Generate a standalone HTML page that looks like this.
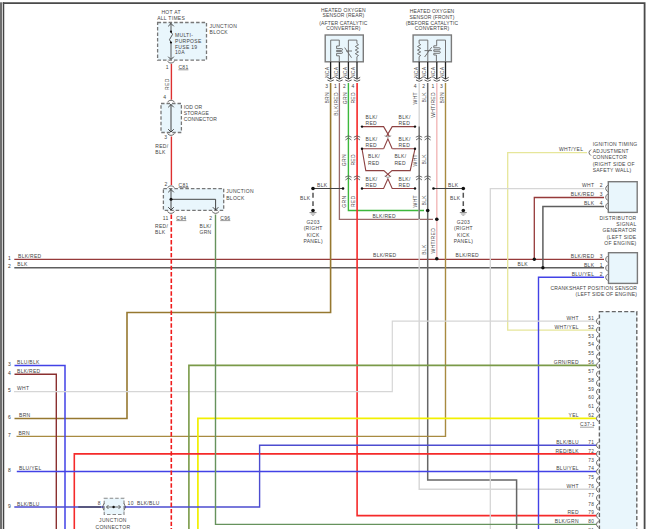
<!DOCTYPE html>
<html><head><meta charset="utf-8"><style>
html,body{margin:0;padding:0;background:#fff;width:650px;height:529px;overflow:hidden}
svg{display:block;font-family:"Liberation Sans",sans-serif}
</style></head><body>
<svg width="650" height="529" viewBox="0 0 650 529">
<rect x="0" y="2.3" width="2" height="527" fill="#6e6e6e"/>
<path d="M3.5,2.3 L3.5,529" stroke="#444" stroke-width="1.5" fill="none" />
<path d="M2.8,3.2 L644.6,3.2 L644.6,529" stroke="#4a4a4a" stroke-width="1.8" fill="none" />
<path d="M14.3,259.3 L604,259.3" stroke="#963a3a" stroke-width="1.3" fill="none" />
<path d="M14.3,267.8 L604,267.8" stroke="#5e5e5e" stroke-width="1.6" fill="none" />
<path d="M330.6,83 L330.6,312.5 L127,312.5 L127,418.5 L14.5,418.5" stroke="#967830" stroke-width="1.6" fill="none" />
<path d="M339.4,83 L339.4,219.3 L433,219.3" stroke="#9a6a6a" stroke-width="1.3" fill="none" />
<path d="M348.4,83 L348.4,210.5 L424,210.5" stroke="#3cb83c" stroke-width="1.4" fill="none" />
<path d="M357.1,83 L357.1,515.6 L596,515.6" stroke="#f52a2a" stroke-width="1.6" fill="none" />
<path d="M419.2,83 L419.2,489.2 L596,489.2" stroke="#d6d6d6" stroke-width="1.4" fill="none" />
<path d="M419.2,126.5 L419.2,219" stroke="#6a6a6a" stroke-width="1.3" fill="none" />
<path d="M427.7,83 L427.7,480 L516.6,480 L516.6,529" stroke="#666" stroke-width="1.5" fill="none" />
<path d="M436.8,83 L436.8,258.8" stroke="#f2b8b8" stroke-width="1.4" fill="none" />
<path d="M445.5,83 L445.5,436.4 L16.5,436.4" stroke="#a88a40" stroke-width="1.4" fill="none" />
<path d="M587,152.6 L507.7,152.6 L507.7,330.04 L596,330.04" stroke="#e6e69a" stroke-width="1.3" fill="none" />
<path d="M604,188.6 L490.3,188.6 L490.3,529" stroke="#d6d6d6" stroke-width="1.3" fill="none" />
<path d="M534.3,259.3 L534.3,197.5 L604,197.5" stroke="#963a3a" stroke-width="1.3" fill="none" />
<path d="M542.9,267.8 L542.9,206.5 L604,206.5" stroke="#5e5e5e" stroke-width="1.5" fill="none" />
<path d="M604,277.3 L538.5,277.3 L538.5,529" stroke="#4242e6" stroke-width="1.4" fill="none" />
<path d="M14.5,365.5 L65,365.5 L65,529" stroke="#4242e6" stroke-width="1.5" fill="none" />
<path d="M14.5,374.2 L56.3,374.2 L56.3,529" stroke="#8a3030" stroke-width="1.4" fill="none" />
<path d="M14,391.6 L392.3,391.6 L392.3,321.2 L596,321.2" stroke="#d6d6d6" stroke-width="1.2" fill="none" />
<path d="M188.9,529 L188.9,365.4 L596,365.4" stroke="#7a9a48" stroke-width="1.6" fill="none" />
<path d="M197.9,529 L197.9,418.44 L596,418.44" stroke="#f2f000" stroke-width="1.7" fill="none" />
<path d="M74.3,529 L74.3,453.9 L596,453.9" stroke="#f52a2a" stroke-width="1.6" fill="none" />
<path d="M16.8,471.5 L596,471.5" stroke="#4242e6" stroke-width="1.4" fill="none" />
<path d="M14.3,507 L259.6,507 L259.6,445.2 L596,445.2" stroke="#4c4cd0" stroke-width="1.4" fill="none" />
<path d="M78.3,507 L101,507" stroke="#444" stroke-width="1.2" fill="none" />
<path d="M171.4,63.8 L171.4,99.7" stroke="#dd3030" stroke-width="1.4" fill="none" />
<path d="M171.4,136.5 L171.4,185" stroke="#dd3030" stroke-width="1.4" fill="none" />
<path d="M171.3,214.5 L171.3,529" stroke="#f01c1c" stroke-width="1.6" fill="none" stroke-dasharray="4.4,2" />
<path d="M215.5,214.5 L215.5,524.4 L596,524.4" stroke="#66925c" stroke-width="1.4" fill="none" />
<path d="M362,126.6 H383.6 L389.3,136.4 M415,126.6 H392.2 L386.5,136.4" stroke="#8e4242" stroke-width="1.1" fill="none"/>
<path d="M384.6,135.8 Q387.9,138.4 391.2,135.8" stroke="#777" stroke-width="0.8" fill="none"/>
<path d="M383.6,148.8 L387.9,138.8 L392.2,148.8" stroke="#8e4242" stroke-width="1.1" fill="none"/>
<path d="M383.6,148.8 H362 L365.8,170.6 H383.8 L390.6,176.6 M392.2,148.8 H415 L410.2,170.6 H392 L385.2,176.6" stroke="#8e4242" stroke-width="1.1" fill="none"/>
<path d="M384.6,176.2 Q387.9,178.6 391.2,176.2" stroke="#777" stroke-width="0.8" fill="none"/>
<path d="M362,188.5 H383.6 L387.9,178.8 L392.2,188.5 H415" stroke="#8e4242" stroke-width="1.1" fill="none"/>
<circle cx="362" cy="126.6" r="1.2" fill="#111"/>
<circle cx="415" cy="126.6" r="1.2" fill="#111"/>
<circle cx="362" cy="148.8" r="1.2" fill="#111"/>
<circle cx="415" cy="148.8" r="1.2" fill="#111"/>
<circle cx="362" cy="188.5" r="1.2" fill="#111"/>
<circle cx="415" cy="188.5" r="1.2" fill="#111"/>
<path d="M313,188.5 L343,188.5" stroke="#444" stroke-width="1.0" fill="none" />
<circle cx="313" cy="188.5" r="1.8" fill="#111"/>
<circle cx="343" cy="188.5" r="1.3" fill="#111"/>
<path d="M313,192.8 L313,206" stroke="#555" stroke-width="1.5" fill="none" stroke-dasharray="5,3.4" />
<circle cx="313" cy="210.5" r="1.8" fill="#111"/>
<path d="M433.5,188.5 L463.3,188.5" stroke="#444" stroke-width="1.0" fill="none" />
<circle cx="463.3" cy="188.5" r="1.8" fill="#111"/>
<circle cx="433.5" cy="188.5" r="1.3" fill="#111"/>
<path d="M463.3,192.8 L463.3,206" stroke="#555" stroke-width="1.5" fill="none" stroke-dasharray="5,3.4" />
<circle cx="463.3" cy="210.5" r="1.8" fill="#111"/>
<path d="M309.5,212.6 L316.5,212.6" stroke="#777" stroke-width="0.9" fill="none" />
<path d="M310.8,214 L315.2,214" stroke="#888" stroke-width="0.8" fill="none" />
<path d="M312,215.3 L314,215.3" stroke="#999" stroke-width="0.8" fill="none" />
<path d="M459.8,212.6 L466.8,212.6" stroke="#777" stroke-width="0.9" fill="none" />
<path d="M461.1,214 L465.5,214" stroke="#888" stroke-width="0.8" fill="none" />
<path d="M462.3,215.3 L464.3,215.3" stroke="#999" stroke-width="0.8" fill="none" />
<circle cx="427.7" cy="210.5" r="1.8" fill="#111"/>
<circle cx="436.8" cy="219.3" r="1.8" fill="#111"/>
<circle cx="436.8" cy="258.8" r="1.8" fill="#111"/>
<circle cx="534.3" cy="259.3" r="1.7" fill="#111"/>
<circle cx="542.9" cy="267.8" r="1.7" fill="#111"/>
<rect x="157.6" y="22.5" width="48.900000000000006" height="37.6" fill="#e9f6fc" stroke="#777" stroke-width="1.3" stroke-dasharray="3.5,2"/>
<rect x="161" y="103.5" width="20.400000000000006" height="29.0" fill="#e9f6fc" stroke="#777" stroke-width="1.3" stroke-dasharray="3.5,2"/>
<rect x="163.4" y="188.6" width="60.29999999999998" height="21.700000000000017" fill="#e9f6fc" stroke="#777" stroke-width="1.3" stroke-dasharray="3.5,2"/>
<rect x="325.2" y="35" width="38.10000000000002" height="26.799999999999997" fill="#e9f6fc" stroke="#7a7a7a" stroke-width="1.4"/>
<rect x="413.1" y="35" width="38.299999999999955" height="26.799999999999997" fill="#e9f6fc" stroke="#7a7a7a" stroke-width="1.4"/>
<rect x="608.3" y="181.7" width="28.90000000000009" height="30.700000000000017" fill="#e9f6fc" stroke="#7a7a7a" stroke-width="1.4"/>
<rect x="608.5" y="252.7" width="28.899999999999977" height="30.69999999999999" fill="#e9f6fc" stroke="#7a7a7a" stroke-width="1.4"/>
<rect x="599.4" y="311.6" width="37.39999999999998" height="223.39999999999998" fill="#e9f6fc" stroke="#666" stroke-width="1.4" stroke-dasharray="4,2.2"/>
<rect x="104.2" y="498.3" width="19.799999999999997" height="16.19999999999999" fill="#e9f6fc" stroke="#888" stroke-width="1.1" stroke-dasharray="3.5,2"/>
<path d="M104,503.5 Q101,507 104,510.5 M124,503.5 Q127,507 124,510.5 M108.5,505 L106.5,507 L108.5,509 M118.5,505 L120.5,507 L118.5,509 M106.5,507 H120.5" stroke="#444" stroke-width="0.8" fill="none"/>
<circle cx="113.6" cy="507" r="1.2" fill="#111"/>
<path d="M171,23 L171,31.7" stroke="#444" stroke-width="0.9" fill="none" />
<path d="M171,31.7 Q174,34.5 171,37 Q168,39.5 171,42.5" stroke="#444" stroke-width="0.9" fill="none"/>
<path d="M171,42.5 L171,59" stroke="#444" stroke-width="0.9" fill="none" />
<circle cx="171" cy="31.7" r="1.1" fill="#111"/>
<circle cx="171" cy="42.5" r="1.1" fill="#111"/>
<path d="M168.2,26.3 L171,23.5 L173.8,26.3" stroke="#333" stroke-width="0.9" fill="none" />
<path d="M168.2,56.7 L171,59.5 L173.8,56.7" stroke="#333" stroke-width="0.9" fill="none" />
<path d="M167.5,61.3 Q171,64.89999999999999 174.5,61.3" stroke="#555" stroke-width="0.9" fill="none"/>
<path d="M171,104 L171,132" stroke="#444" stroke-width="1.0" fill="none" />
<path d="M168.2,107.3 L171,104.5 L173.8,107.3" stroke="#333" stroke-width="0.9" fill="none" />
<path d="M168.2,129.2 L171,132 L173.8,129.2" stroke="#333" stroke-width="0.9" fill="none" />
<path d="M167.5,133.6 Q171,137.2 174.5,133.6" stroke="#555" stroke-width="0.9" fill="none"/>
<path d="M167.5,102 Q171,98.4 174.5,102" stroke="#555" stroke-width="0.9" fill="none"/>
<path d="M167.5,187.6 Q171,184.0 174.5,187.6" stroke="#555" stroke-width="0.9" fill="none"/>
<path d="M171,189 L171,210" stroke="#333" stroke-width="0.9" fill="none" />
<path d="M171,199.3 L215.6,199.3 L215.6,210" stroke="#333" stroke-width="0.9" fill="none" />
<circle cx="171" cy="199.3" r="1.5" fill="#111"/>
<path d="M168.2,192.3 L171,189.5 L173.8,192.3" stroke="#333" stroke-width="0.9" fill="none" />
<path d="M168.2,207.2 L171,210 L173.8,207.2" stroke="#333" stroke-width="0.9" fill="none" />
<path d="M212.79999999999998,207.2 L215.6,210 L218.4,207.2" stroke="#333" stroke-width="0.9" fill="none" />
<path d="M167.5,211.6 Q171,215.2 174.5,211.6" stroke="#555" stroke-width="0.9" fill="none"/>
<path d="M212.1,211.6 Q215.6,215.2 219.1,211.6" stroke="#555" stroke-width="0.9" fill="none"/>
<path d="M330.6,61.8 L330.6,79" stroke="#222" stroke-width="1.3" fill="none" />
<path d="M327.40000000000003,77.3 L330.6,79.2 L333.8,77.3 M327.40000000000003,80 Q330.6,82.6 333.8,80" stroke="#444" stroke-width="0.9" fill="none"/>
<path d="M339.4,61.8 L339.4,79" stroke="#222" stroke-width="1.3" fill="none" />
<path d="M336.2,77.3 L339.4,79.2 L342.59999999999997,77.3 M336.2,80 Q339.4,82.6 342.59999999999997,80" stroke="#444" stroke-width="0.9" fill="none"/>
<path d="M348.4,61.8 L348.4,79" stroke="#222" stroke-width="1.3" fill="none" />
<path d="M345.2,77.3 L348.4,79.2 L351.59999999999997,77.3 M345.2,80 Q348.4,82.6 351.59999999999997,80" stroke="#444" stroke-width="0.9" fill="none"/>
<path d="M357,61.8 L357,79" stroke="#222" stroke-width="1.3" fill="none" />
<path d="M353.8,77.3 L357,79.2 L360.2,77.3 M353.8,80 Q357,82.6 360.2,80" stroke="#444" stroke-width="0.9" fill="none"/>
<path d="M419.2,61.8 L419.2,79" stroke="#222" stroke-width="1.3" fill="none" />
<path d="M416.0,77.3 L419.2,79.2 L422.4,77.3 M416.0,80 Q419.2,82.6 422.4,80" stroke="#444" stroke-width="0.9" fill="none"/>
<path d="M427.7,61.8 L427.7,79" stroke="#222" stroke-width="1.3" fill="none" />
<path d="M424.5,77.3 L427.7,79.2 L430.9,77.3 M424.5,80 Q427.7,82.6 430.9,80" stroke="#444" stroke-width="0.9" fill="none"/>
<path d="M436.8,61.8 L436.8,79" stroke="#222" stroke-width="1.3" fill="none" />
<path d="M433.6,77.3 L436.8,79.2 L440.0,77.3 M433.6,80 Q436.8,82.6 440.0,80" stroke="#444" stroke-width="0.9" fill="none"/>
<path d="M445.5,61.8 L445.5,79" stroke="#222" stroke-width="1.3" fill="none" />
<path d="M442.3,77.3 L445.5,79.2 L448.7,77.3 M442.3,80 Q445.5,82.6 448.7,80" stroke="#444" stroke-width="0.9" fill="none"/>
<path d="M330.7,61.8 V40.1 H339.3 V46 H336.6 V48.6 H341.6 A0.9,0.9 0 0 1 341.6,50.4 H336.6 V51.6 H341.6 A0.9,0.9 0 0 1 341.6,53.4 H336.6 V55.8 H339.3 V61.8" stroke="#666" stroke-width="0.9" fill="none"/>
<path d="M348.4,61.8 V40.1 H356.9 V43.5 l1.6,1.2 l-3.2,1.8 l3.2,1.8 l-3.2,1.8 l3.2,1.8 l-3.2,1.8 l3.2,1.8 l-1.6,1.2 V61.8" stroke="#666" stroke-width="0.9" fill="none"/>
<path d="M344.7,47.6 L351.5,57.7 M346,51 H352" stroke="#666" stroke-width="0.9" fill="none"/>
<path d="M445.5,61.8 V40.1 H436.7 V45.8 H433.8 V47.8 H439.3 A1,1 0 0 1 439.3,49.8 H433.8 V51.3 H439.3 A1,1 0 0 1 439.3,53.3 H433.8 V55 H436.4 V61.8" stroke="#666" stroke-width="0.9" fill="none"/>
<path d="M427.8,61.8 V40.1 H419.1 V43.5 l1.6,1.2 l-3.2,1.8 l3.2,1.8 l-3.2,1.8 l3.2,1.8 l-3.2,1.8 l3.2,1.8 l-1.6,1.2 V61.8" stroke="#666" stroke-width="0.9" fill="none"/>
<path d="M424.6,57 L431.7,47.2 M424.5,50.6 H432" stroke="#666" stroke-width="0.9" fill="none"/>
<path d="M345.2,137.2 Q348.4,134.4 351.59999999999997,137.2 M345.4,140 L348.4,137.9 L351.4,140" stroke="#555" stroke-width="0.85" fill="none"/>
<path d="M353.8,137.2 Q357,134.4 360.2,137.2 M354,140 L357,137.9 L360,140" stroke="#555" stroke-width="0.85" fill="none"/>
<path d="M415.8,137.2 Q419,134.4 422.2,137.2 M416,140 L419,137.9 L422,140" stroke="#555" stroke-width="0.85" fill="none"/>
<path d="M424.40000000000003,137.2 Q427.6,134.4 430.8,137.2 M424.6,140 L427.6,137.9 L430.6,140" stroke="#555" stroke-width="0.85" fill="none"/>
<path d="M345.2,177.2 Q348.4,174.4 351.59999999999997,177.2 M345.4,180 L348.4,177.9 L351.4,180" stroke="#555" stroke-width="0.85" fill="none"/>
<path d="M353.8,177.2 Q357,174.4 360.2,177.2 M354,180 L357,177.9 L360,180" stroke="#555" stroke-width="0.85" fill="none"/>
<path d="M415.8,177.2 Q419,174.4 422.2,177.2 M416,180 L419,177.9 L422,180" stroke="#555" stroke-width="0.85" fill="none"/>
<path d="M424.40000000000003,177.2 Q427.6,174.4 430.8,177.2 M424.6,180 L427.6,177.9 L430.6,180" stroke="#555" stroke-width="0.85" fill="none"/>
<path d="M598.4,318.0 Q594.6,321.2 598.4,324.4" stroke="#555" stroke-width="0.9" fill="none"/>
<text x="594.3" y="319.9" text-anchor="end" font-size="4.8" letter-spacing="0.3" fill="#444" >51</text>
<path d="M598.4,326.84 Q594.6,330.03999999999996 598.4,333.23999999999995" stroke="#555" stroke-width="0.9" fill="none"/>
<text x="594.3" y="328.73999999999995" text-anchor="end" font-size="4.8" letter-spacing="0.3" fill="#444" >52</text>
<path d="M598.4,335.68 Q594.6,338.88 598.4,342.08" stroke="#555" stroke-width="0.9" fill="none"/>
<text x="594.3" y="337.58" text-anchor="end" font-size="4.8" letter-spacing="0.3" fill="#444" >53</text>
<path d="M598.4,344.52 Q594.6,347.71999999999997 598.4,350.91999999999996" stroke="#555" stroke-width="0.9" fill="none"/>
<text x="594.3" y="346.41999999999996" text-anchor="end" font-size="4.8" letter-spacing="0.3" fill="#444" >54</text>
<path d="M598.4,353.36 Q594.6,356.56 598.4,359.76" stroke="#555" stroke-width="0.9" fill="none"/>
<text x="594.3" y="355.26" text-anchor="end" font-size="4.8" letter-spacing="0.3" fill="#444" >55</text>
<path d="M598.4,362.2 Q594.6,365.4 598.4,368.59999999999997" stroke="#555" stroke-width="0.9" fill="none"/>
<text x="594.3" y="364.09999999999997" text-anchor="end" font-size="4.8" letter-spacing="0.3" fill="#444" >56</text>
<path d="M598.4,371.04 Q594.6,374.24 598.4,377.44" stroke="#555" stroke-width="0.9" fill="none"/>
<text x="594.3" y="372.94" text-anchor="end" font-size="4.8" letter-spacing="0.3" fill="#444" >57</text>
<path d="M598.4,379.88 Q594.6,383.08 598.4,386.28" stroke="#555" stroke-width="0.9" fill="none"/>
<text x="594.3" y="381.78" text-anchor="end" font-size="4.8" letter-spacing="0.3" fill="#444" >58</text>
<path d="M598.4,388.71999999999997 Q594.6,391.91999999999996 598.4,395.11999999999995" stroke="#555" stroke-width="0.9" fill="none"/>
<text x="594.3" y="390.61999999999995" text-anchor="end" font-size="4.8" letter-spacing="0.3" fill="#444" >59</text>
<path d="M598.4,397.56 Q594.6,400.76 598.4,403.96" stroke="#555" stroke-width="0.9" fill="none"/>
<text x="594.3" y="399.46" text-anchor="end" font-size="4.8" letter-spacing="0.3" fill="#444" >60</text>
<path d="M598.4,406.40000000000003 Q594.6,409.6 598.4,412.8" stroke="#555" stroke-width="0.9" fill="none"/>
<text x="594.3" y="408.3" text-anchor="end" font-size="4.8" letter-spacing="0.3" fill="#444" >61</text>
<path d="M598.4,415.24 Q594.6,418.44 598.4,421.64" stroke="#555" stroke-width="0.9" fill="none"/>
<text x="594.3" y="417.14" text-anchor="end" font-size="4.8" letter-spacing="0.3" fill="#444" >62</text>
<path d="M598.4,442.0 Q594.6,445.2 598.4,448.4" stroke="#555" stroke-width="0.9" fill="none"/>
<text x="594.3" y="443.9" text-anchor="end" font-size="4.8" letter-spacing="0.3" fill="#444" >71</text>
<path d="M598.4,450.8 Q594.6,454.0 598.4,457.2" stroke="#555" stroke-width="0.9" fill="none"/>
<text x="594.3" y="452.7" text-anchor="end" font-size="4.8" letter-spacing="0.3" fill="#444" >72</text>
<path d="M598.4,459.6 Q594.6,462.8 598.4,466.0" stroke="#555" stroke-width="0.9" fill="none"/>
<text x="594.3" y="461.5" text-anchor="end" font-size="4.8" letter-spacing="0.3" fill="#444" >73</text>
<path d="M598.4,468.4 Q594.6,471.59999999999997 598.4,474.79999999999995" stroke="#555" stroke-width="0.9" fill="none"/>
<text x="594.3" y="470.29999999999995" text-anchor="end" font-size="4.8" letter-spacing="0.3" fill="#444" >74</text>
<path d="M598.4,477.2 Q594.6,480.4 598.4,483.59999999999997" stroke="#555" stroke-width="0.9" fill="none"/>
<text x="594.3" y="479.09999999999997" text-anchor="end" font-size="4.8" letter-spacing="0.3" fill="#444" >75</text>
<path d="M598.4,486.0 Q594.6,489.2 598.4,492.4" stroke="#555" stroke-width="0.9" fill="none"/>
<text x="594.3" y="487.9" text-anchor="end" font-size="4.8" letter-spacing="0.3" fill="#444" >76</text>
<path d="M598.4,494.8 Q594.6,498.0 598.4,501.2" stroke="#555" stroke-width="0.9" fill="none"/>
<text x="594.3" y="496.7" text-anchor="end" font-size="4.8" letter-spacing="0.3" fill="#444" >77</text>
<path d="M598.4,503.6 Q594.6,506.8 598.4,510.0" stroke="#555" stroke-width="0.9" fill="none"/>
<text x="594.3" y="505.5" text-anchor="end" font-size="4.8" letter-spacing="0.3" fill="#444" >78</text>
<path d="M598.4,512.4 Q594.6,515.6 598.4,518.8000000000001" stroke="#555" stroke-width="0.9" fill="none"/>
<text x="594.3" y="514.3000000000001" text-anchor="end" font-size="4.8" letter-spacing="0.3" fill="#444" >79</text>
<path d="M598.4,521.1999999999999 Q594.6,524.4 598.4,527.6" stroke="#555" stroke-width="0.9" fill="none"/>
<text x="594.3" y="523.1" text-anchor="end" font-size="4.8" letter-spacing="0.3" fill="#444" >80</text>
<path d="M598.4,530.0 Q594.6,533.2 598.4,536.4000000000001" stroke="#555" stroke-width="0.9" fill="none"/>
<text x="594.3" y="531.9000000000001" text-anchor="end" font-size="4.8" letter-spacing="0.3" fill="#444" >81</text>
<path d="M607.6,185.3 Q603.8,188.5 607.6,191.7" stroke="#555" stroke-width="0.9" fill="none"/>
<path d="M607.6,194.0 Q603.8,197.2 607.6,200.39999999999998" stroke="#555" stroke-width="0.9" fill="none"/>
<path d="M607.6,203.10000000000002 Q603.8,206.3 607.6,209.5" stroke="#555" stroke-width="0.9" fill="none"/>
<path d="M607.6,256.0 Q603.8,259.2 607.6,262.4" stroke="#555" stroke-width="0.9" fill="none"/>
<path d="M607.6,264.8 Q603.8,268 607.6,271.2" stroke="#555" stroke-width="0.9" fill="none"/>
<path d="M607.6,274.1 Q603.8,277.3 607.6,280.5" stroke="#555" stroke-width="0.9" fill="none"/>
<path d="M591,149.6 Q587,152.6 591,155.6" stroke="#555" stroke-width="0.9" fill="none"/>
<text x="171.15" y="13.5" text-anchor="middle" font-size="5" letter-spacing="0.3" fill="#444" >HOT AT</text>
<text x="171.15" y="20" text-anchor="middle" font-size="5" letter-spacing="0.3" fill="#444" >ALL TIMES</text>
<text x="175" y="37.0" text-anchor="start" font-size="5" letter-spacing="0.3" fill="#444" >MULTI-</text>
<text x="175" y="42.8" text-anchor="start" font-size="5" letter-spacing="0.3" fill="#444" >PURPOSE</text>
<text x="175" y="48.6" text-anchor="start" font-size="5" letter-spacing="0.3" fill="#444" >FUSE 19</text>
<text x="175" y="54.4" text-anchor="start" font-size="5" letter-spacing="0.3" fill="#444" >10A</text>
<text x="209.5" y="28" text-anchor="start" font-size="5" letter-spacing="0.3" fill="#444" >JUNCTION</text>
<text x="209.5" y="34" text-anchor="start" font-size="5" letter-spacing="0.3" fill="#444" >BLOCK</text>
<text x="168.8" y="68.5" text-anchor="end" font-size="5" letter-spacing="0.3" fill="#444" >1</text>
<text x="178.4" y="68.7" text-anchor="start" font-size="5" letter-spacing="0.3" fill="#444" >C81</text>
<path d="M178.4,69.8 L188.4,69.8" stroke="#555" stroke-width="0.6" fill="none" />
<text x="0" y="0" transform="translate(169,78.4) rotate(-90)" text-anchor="end" font-size="5" letter-spacing="0.35" fill="#444">RED</text>
<text x="166.3" y="99" text-anchor="end" font-size="5" letter-spacing="0.3" fill="#444" >4</text>
<text x="183.8" y="108.8" text-anchor="start" font-size="5" letter-spacing="0.12" fill="#444" >IOD OR</text>
<text x="183.8" y="115.05" text-anchor="start" font-size="5" letter-spacing="0.12" fill="#444" >STORAGE</text>
<text x="183.8" y="121.3" text-anchor="start" font-size="5" letter-spacing="0.12" fill="#444" >CONNECTOR</text>
<text x="167.3" y="139.2" text-anchor="end" font-size="5" letter-spacing="0.3" fill="#444" >3</text>
<text x="155.3" y="147.8" text-anchor="start" font-size="5" letter-spacing="0.3" fill="#444" >RED/</text>
<text x="155.3" y="154.3" text-anchor="start" font-size="5" letter-spacing="0.3" fill="#444" >BLK</text>
<text x="167.5" y="186.4" text-anchor="end" font-size="5" letter-spacing="0.3" fill="#444" >2</text>
<text x="178.5" y="186.6" text-anchor="start" font-size="5" letter-spacing="0.3" fill="#444" >C81</text>
<path d="M178.5,187.4 L188.5,187.4" stroke="#555" stroke-width="0.6" fill="none" />
<text x="226.2" y="193" text-anchor="start" font-size="5" letter-spacing="0.3" fill="#444" >JUNCTION</text>
<text x="226.2" y="199.8" text-anchor="start" font-size="5" letter-spacing="0.3" fill="#444" >BLOCK</text>
<text x="168.5" y="219.6" text-anchor="end" font-size="5" letter-spacing="0.3" fill="#444" >11</text>
<text x="176.3" y="219.6" text-anchor="start" font-size="5" letter-spacing="0.3" fill="#444" >C94</text>
<path d="M176.3,220.6 L186.3,220.6" stroke="#555" stroke-width="0.6" fill="none" />
<text x="212.3" y="219.6" text-anchor="end" font-size="5" letter-spacing="0.3" fill="#444" >2</text>
<text x="220.3" y="219.6" text-anchor="start" font-size="5" letter-spacing="0.3" fill="#444" >C96</text>
<path d="M220.3,220.6 L230.3,220.6" stroke="#555" stroke-width="0.6" fill="none" />
<text x="155" y="228" text-anchor="start" font-size="5" letter-spacing="0.3" fill="#444" >RED/</text>
<text x="155" y="234" text-anchor="start" font-size="5" letter-spacing="0.3" fill="#444" >BLK</text>
<text x="199.5" y="228" text-anchor="start" font-size="5" letter-spacing="0.3" fill="#444" >BLK/</text>
<text x="199.5" y="234" text-anchor="start" font-size="5" letter-spacing="0.3" fill="#444" >GRN</text>
<text x="343.375" y="12" text-anchor="middle" font-size="5" letter-spacing="0.15" fill="#444" >HEATED OXYGEN</text>
<text x="343.375" y="16.5" text-anchor="middle" font-size="5" letter-spacing="0.15" fill="#444" >SENSOR (REAR)</text>
<text x="343.375" y="24.5" text-anchor="middle" font-size="5" letter-spacing="0.15" fill="#444" >(AFTER CATALYTIC</text>
<text x="343.375" y="30" text-anchor="middle" font-size="5" letter-spacing="0.15" fill="#444" >CONVERTER)</text>
<text x="432.075" y="12.5" text-anchor="middle" font-size="5" letter-spacing="0.15" fill="#444" >HEATED OXYGEN</text>
<text x="432.075" y="18.5" text-anchor="middle" font-size="5" letter-spacing="0.15" fill="#444" >SENSOR (FRONT)</text>
<text x="432.075" y="24.5" text-anchor="middle" font-size="5" letter-spacing="0.15" fill="#444" >(BEFORE CATALYTIC</text>
<text x="432.075" y="30" text-anchor="middle" font-size="5" letter-spacing="0.15" fill="#444" >CONVERTER)</text>
<text x="0" y="0" transform="translate(329.0,66.5) rotate(-90)" text-anchor="end" font-size="5" letter-spacing="0.35" fill="#444">NCA</text>
<text x="0" y="0" transform="translate(337.79999999999995,66.5) rotate(-90)" text-anchor="end" font-size="5" letter-spacing="0.35" fill="#444">NCA</text>
<text x="0" y="0" transform="translate(346.79999999999995,66.5) rotate(-90)" text-anchor="end" font-size="5" letter-spacing="0.35" fill="#444">NCA</text>
<text x="0" y="0" transform="translate(355.4,66.5) rotate(-90)" text-anchor="end" font-size="5" letter-spacing="0.35" fill="#444">NCA</text>
<text x="0" y="0" transform="translate(417.59999999999997,66.5) rotate(-90)" text-anchor="end" font-size="5" letter-spacing="0.35" fill="#444">NCA</text>
<text x="0" y="0" transform="translate(426.09999999999997,66.5) rotate(-90)" text-anchor="end" font-size="5" letter-spacing="0.35" fill="#444">NCA</text>
<text x="0" y="0" transform="translate(435.2,66.5) rotate(-90)" text-anchor="end" font-size="5" letter-spacing="0.35" fill="#444">NCA</text>
<text x="0" y="0" transform="translate(443.9,66.5) rotate(-90)" text-anchor="end" font-size="5" letter-spacing="0.35" fill="#444">NCA</text>
<text x="326.75" y="88" text-anchor="middle" font-size="5" letter-spacing="0.3" fill="#444" >3</text>
<text x="335.54999999999995" y="88" text-anchor="middle" font-size="5" letter-spacing="0.3" fill="#444" >1</text>
<text x="344.54999999999995" y="88" text-anchor="middle" font-size="5" letter-spacing="0.3" fill="#444" >2</text>
<text x="353.15" y="88" text-anchor="middle" font-size="5" letter-spacing="0.3" fill="#444" >4</text>
<text x="415.34999999999997" y="88" text-anchor="middle" font-size="5" letter-spacing="0.3" fill="#444" >4</text>
<text x="423.84999999999997" y="88" text-anchor="middle" font-size="5" letter-spacing="0.3" fill="#444" >2</text>
<text x="432.95" y="88" text-anchor="middle" font-size="5" letter-spacing="0.3" fill="#444" >1</text>
<text x="441.65" y="88" text-anchor="middle" font-size="5" letter-spacing="0.3" fill="#444" >3</text>
<text x="0" y="0" transform="translate(328.8,92) rotate(-90)" text-anchor="end" font-size="5" letter-spacing="0.35" fill="#444">BRN</text>
<text x="0" y="0" transform="translate(337.59999999999997,92) rotate(-90)" text-anchor="end" font-size="5" letter-spacing="0.35" fill="#444">BLK/RED</text>
<text x="0" y="0" transform="translate(346.59999999999997,92) rotate(-90)" text-anchor="end" font-size="5" letter-spacing="0.35" fill="#444">GRN</text>
<text x="0" y="0" transform="translate(355.2,92) rotate(-90)" text-anchor="end" font-size="5" letter-spacing="0.35" fill="#444">RED</text>
<text x="0" y="0" transform="translate(417.4,92) rotate(-90)" text-anchor="end" font-size="5" letter-spacing="0.35" fill="#444">WHT</text>
<text x="0" y="0" transform="translate(425.9,92) rotate(-90)" text-anchor="end" font-size="5" letter-spacing="0.35" fill="#444">BLK</text>
<text x="0" y="0" transform="translate(435.0,92) rotate(-90)" text-anchor="end" font-size="5" letter-spacing="0.35" fill="#444">WHT/RED</text>
<text x="0" y="0" transform="translate(443.7,92) rotate(-90)" text-anchor="end" font-size="5" letter-spacing="0.35" fill="#444">BRN</text>
<text x="365.5" y="118.89999999999999" text-anchor="start" font-size="5" letter-spacing="0.3" fill="#444" >BLK/</text>
<text x="365.5" y="125.3" text-anchor="start" font-size="5" letter-spacing="0.3" fill="#444" >RED</text>
<text x="398.6" y="118.89999999999999" text-anchor="start" font-size="5" letter-spacing="0.3" fill="#444" >BLK/</text>
<text x="398.6" y="125.3" text-anchor="start" font-size="5" letter-spacing="0.3" fill="#444" >RED</text>
<text x="365.5" y="140.79999999999998" text-anchor="start" font-size="5" letter-spacing="0.3" fill="#444" >BLK/</text>
<text x="365.5" y="147.2" text-anchor="start" font-size="5" letter-spacing="0.3" fill="#444" >RED</text>
<text x="398.6" y="140.79999999999998" text-anchor="start" font-size="5" letter-spacing="0.3" fill="#444" >BLK/</text>
<text x="398.6" y="147.2" text-anchor="start" font-size="5" letter-spacing="0.3" fill="#444" >RED</text>
<text x="368" y="158.1" text-anchor="start" font-size="5" letter-spacing="0.3" fill="#444" >BLK/</text>
<text x="368" y="164.5" text-anchor="start" font-size="5" letter-spacing="0.3" fill="#444" >RED</text>
<text x="394.4" y="158.1" text-anchor="start" font-size="5" letter-spacing="0.3" fill="#444" >BLK/</text>
<text x="394.4" y="164.5" text-anchor="start" font-size="5" letter-spacing="0.3" fill="#444" >RED</text>
<text x="365.5" y="180.6" text-anchor="start" font-size="5" letter-spacing="0.3" fill="#444" >BLK/</text>
<text x="365.5" y="187" text-anchor="start" font-size="5" letter-spacing="0.3" fill="#444" >RED</text>
<text x="398.6" y="180.6" text-anchor="start" font-size="5" letter-spacing="0.3" fill="#444" >BLK/</text>
<text x="398.6" y="187" text-anchor="start" font-size="5" letter-spacing="0.3" fill="#444" >RED</text>
<text x="0" y="0" transform="translate(346.4,154) rotate(-90)" text-anchor="end" font-size="5" letter-spacing="0.35" fill="#444">GRN</text>
<text x="0" y="0" transform="translate(355.2,154) rotate(-90)" text-anchor="end" font-size="5" letter-spacing="0.35" fill="#444">RED</text>
<text x="0" y="0" transform="translate(346.4,195.5) rotate(-90)" text-anchor="end" font-size="5" letter-spacing="0.35" fill="#444">GRN</text>
<text x="0" y="0" transform="translate(355.2,195.5) rotate(-90)" text-anchor="end" font-size="5" letter-spacing="0.35" fill="#444">RED</text>
<text x="0" y="0" transform="translate(417.2,154) rotate(-90)" text-anchor="end" font-size="5" letter-spacing="0.35" fill="#444">WHT</text>
<text x="0" y="0" transform="translate(425.8,154) rotate(-90)" text-anchor="end" font-size="5" letter-spacing="0.35" fill="#444">BLK</text>
<text x="0" y="0" transform="translate(417.2,195) rotate(-90)" text-anchor="end" font-size="5" letter-spacing="0.35" fill="#444">WHT</text>
<text x="0" y="0" transform="translate(425.8,195) rotate(-90)" text-anchor="end" font-size="5" letter-spacing="0.35" fill="#444">BLK</text>
<text x="0" y="0" transform="translate(434.8,227.8) rotate(-90)" text-anchor="end" font-size="5" letter-spacing="0.35" fill="#444">WHT/RED</text>
<text x="0" y="0" transform="translate(425.8,244.3) rotate(-90)" text-anchor="end" font-size="5" letter-spacing="0.35" fill="#444">BLK</text>
<text x="317" y="187" text-anchor="start" font-size="5" letter-spacing="0.3" fill="#444" >BLK</text>
<text x="300" y="199.5" text-anchor="start" font-size="5" letter-spacing="0.3" fill="#444" >BLK</text>
<text x="448" y="186.8" text-anchor="start" font-size="5" letter-spacing="0.3" fill="#444" >BLK</text>
<text x="450" y="199.5" text-anchor="start" font-size="5" letter-spacing="0.3" fill="#444" >BLK</text>
<text x="313.15" y="224.0" text-anchor="middle" font-size="5" letter-spacing="0.3" fill="#444" >G203</text>
<text x="313.15" y="230.3" text-anchor="middle" font-size="5" letter-spacing="0.3" fill="#444" >(RIGHT</text>
<text x="313.15" y="236.6" text-anchor="middle" font-size="5" letter-spacing="0.3" fill="#444" >KICK</text>
<text x="313.15" y="242.9" text-anchor="middle" font-size="5" letter-spacing="0.3" fill="#444" >PANEL)</text>
<text x="463.45" y="224.0" text-anchor="middle" font-size="5" letter-spacing="0.3" fill="#444" >G203</text>
<text x="463.45" y="230.3" text-anchor="middle" font-size="5" letter-spacing="0.3" fill="#444" >(RIGHT</text>
<text x="463.45" y="236.6" text-anchor="middle" font-size="5" letter-spacing="0.3" fill="#444" >KICK</text>
<text x="463.45" y="242.9" text-anchor="middle" font-size="5" letter-spacing="0.3" fill="#444" >PANEL)</text>
<text x="384.15" y="218" text-anchor="middle" font-size="5" letter-spacing="0.3" fill="#444" >BLK/RED</text>
<text x="583.3" y="151" text-anchor="end" font-size="5" letter-spacing="0.3" fill="#444" >WHT/YEL</text>
<text x="592.7" y="146.2" text-anchor="start" font-size="5" letter-spacing="0.25" fill="#444" >IGNITION TIMING</text>
<text x="592.7" y="152.7" text-anchor="start" font-size="5" letter-spacing="0.25" fill="#444" >ADJUSTMENT</text>
<text x="592.7" y="159.2" text-anchor="start" font-size="5" letter-spacing="0.25" fill="#444" >CONNECTOR</text>
<text x="592.7" y="165.7" text-anchor="start" font-size="5" letter-spacing="0.25" fill="#444" >(RIGHT SIDE OF</text>
<text x="592.7" y="172.2" text-anchor="start" font-size="5" letter-spacing="0.25" fill="#444" >SAFETY WALL)</text>
<text x="594.3" y="187" text-anchor="end" font-size="5" letter-spacing="0.3" fill="#444" >WHT</text>
<text x="602.9" y="187" text-anchor="end" font-size="5" letter-spacing="0.3" fill="#444" >2</text>
<text x="594.3" y="195.8" text-anchor="end" font-size="5" letter-spacing="0.3" fill="#444" >BLK/RED</text>
<text x="602.9" y="195.8" text-anchor="end" font-size="5" letter-spacing="0.3" fill="#444" >3</text>
<text x="594.3" y="204.8" text-anchor="end" font-size="5" letter-spacing="0.3" fill="#444" >BLK</text>
<text x="602.9" y="204.8" text-anchor="end" font-size="5" letter-spacing="0.3" fill="#444" >4</text>
<text x="636.5" y="219.5" text-anchor="end" font-size="5" letter-spacing="0.3" fill="#444" >DISTRIBUTOR</text>
<text x="636.5" y="225.9" text-anchor="end" font-size="5" letter-spacing="0.3" fill="#444" >SIGNAL</text>
<text x="636.5" y="232.3" text-anchor="end" font-size="5" letter-spacing="0.3" fill="#444" >GENERATOR</text>
<text x="636.5" y="238.7" text-anchor="end" font-size="5" letter-spacing="0.3" fill="#444" >(LEFT SIDE</text>
<text x="636.5" y="245.1" text-anchor="end" font-size="5" letter-spacing="0.3" fill="#444" >OF ENGINE)</text>
<text x="594.3" y="257.8" text-anchor="end" font-size="5" letter-spacing="0.3" fill="#444" >BLK/RED</text>
<text x="602.9" y="257.8" text-anchor="end" font-size="5" letter-spacing="0.3" fill="#444" >3</text>
<text x="594.3" y="266.6" text-anchor="end" font-size="5" letter-spacing="0.3" fill="#444" >BLK</text>
<text x="602.9" y="266.6" text-anchor="end" font-size="5" letter-spacing="0.3" fill="#444" >1</text>
<text x="594.3" y="275.8" text-anchor="end" font-size="5" letter-spacing="0.3" fill="#444" >BLU/YEL</text>
<text x="602.9" y="275.8" text-anchor="end" font-size="5" letter-spacing="0.3" fill="#444" >2</text>
<text x="637.2" y="290" text-anchor="end" font-size="5" letter-spacing="0.2" fill="#444" >CRANKSHAFT POSITION SENSOR</text>
<text x="637.2" y="296" text-anchor="end" font-size="5" letter-spacing="0.2" fill="#444" >(LEFT SIDE OF ENGINE)</text>
<text x="578.9" y="532.6" text-anchor="end" font-size="5" letter-spacing="0.3" fill="#444" >BLU/YEL</text>
<text x="594.3" y="532.6" text-anchor="end" font-size="5" letter-spacing="0.3" fill="#444" >81</text>
<text x="373" y="257.3" text-anchor="start" font-size="5" letter-spacing="0.3" fill="#444" >BLK/RED</text>
<text x="455.5" y="257.3" text-anchor="start" font-size="5" letter-spacing="0.3" fill="#444" >BLK/RED</text>
<text x="517.5" y="266.2" text-anchor="start" font-size="5" letter-spacing="0.3" fill="#444" >BLK</text>
<text x="578.9" y="319.7" text-anchor="end" font-size="5" letter-spacing="0.3" fill="#444" >WHT</text>
<text x="578.9" y="328.53999999999996" text-anchor="end" font-size="5" letter-spacing="0.3" fill="#444" >WHT/YEL</text>
<text x="578.9" y="363.9" text-anchor="end" font-size="5" letter-spacing="0.3" fill="#444" >GRN/RED</text>
<text x="578.9" y="416.94" text-anchor="end" font-size="5" letter-spacing="0.3" fill="#444" >YEL</text>
<text x="578.9" y="443.7" text-anchor="end" font-size="5" letter-spacing="0.3" fill="#444" >BLK/BLU</text>
<text x="578.9" y="452.5" text-anchor="end" font-size="5" letter-spacing="0.3" fill="#444" >RED/BLK</text>
<text x="578.9" y="470.09999999999997" text-anchor="end" font-size="5" letter-spacing="0.3" fill="#444" >BLU/YEL</text>
<text x="578.9" y="487.7" text-anchor="end" font-size="5" letter-spacing="0.3" fill="#444" >WHT</text>
<text x="578.9" y="514.1" text-anchor="end" font-size="5" letter-spacing="0.3" fill="#444" >RED</text>
<text x="578.9" y="522.9" text-anchor="end" font-size="5" letter-spacing="0.3" fill="#444" >BLK/GRN</text>
<text x="580" y="426" text-anchor="start" font-size="5" letter-spacing="0.3" fill="#444" >C37-1</text>
<path d="M580,427.2 L594,427.2" stroke="#444" stroke-width="0.5" fill="none" />
<text x="9.3" y="259.90000000000003" text-anchor="middle" font-size="5" letter-spacing="0" fill="#333" >1</text>
<text x="18" y="257.8" text-anchor="start" font-size="5" letter-spacing="0.3" fill="#444" >BLK/RED</text>
<text x="9.3" y="268.40000000000003" text-anchor="middle" font-size="5" letter-spacing="0" fill="#333" >2</text>
<text x="17.3" y="266.3" text-anchor="start" font-size="5" letter-spacing="0.3" fill="#444" >BLK</text>
<text x="9.3" y="366.1" text-anchor="middle" font-size="5" letter-spacing="0" fill="#333" >3</text>
<text x="17" y="364.0" text-anchor="start" font-size="5" letter-spacing="0.3" fill="#444" >BLU/BLK</text>
<text x="9.3" y="374.8" text-anchor="middle" font-size="5" letter-spacing="0" fill="#333" >4</text>
<text x="17" y="372.7" text-anchor="start" font-size="5" letter-spacing="0.3" fill="#444" >BLK/RED</text>
<text x="9.3" y="392.20000000000005" text-anchor="middle" font-size="5" letter-spacing="0" fill="#333" >5</text>
<text x="17" y="390.1" text-anchor="start" font-size="5" letter-spacing="0.3" fill="#444" >WHT</text>
<text x="9.3" y="419.1" text-anchor="middle" font-size="5" letter-spacing="0" fill="#333" >6</text>
<text x="19" y="417.0" text-anchor="start" font-size="5" letter-spacing="0.3" fill="#444" >BRN</text>
<text x="9.3" y="437.0" text-anchor="middle" font-size="5" letter-spacing="0" fill="#333" >7</text>
<text x="18.4" y="434.9" text-anchor="start" font-size="5" letter-spacing="0.3" fill="#444" >BRN</text>
<text x="9.3" y="472.1" text-anchor="middle" font-size="5" letter-spacing="0" fill="#333" >8</text>
<text x="18.9" y="470.0" text-anchor="start" font-size="5" letter-spacing="0.3" fill="#444" >BLU/YEL</text>
<text x="9.3" y="507.6" text-anchor="middle" font-size="5" letter-spacing="0" fill="#333" >9</text>
<text x="17" y="505.5" text-anchor="start" font-size="5" letter-spacing="0.3" fill="#444" >BLK/BLU</text>
<text x="100.8" y="505" text-anchor="end" font-size="5" letter-spacing="0.3" fill="#444" >8</text>
<text x="127.6" y="505" text-anchor="start" font-size="5" letter-spacing="0.3" fill="#444" >10</text>
<text x="137" y="505" text-anchor="start" font-size="5" letter-spacing="0.3" fill="#444" >BLK/BLU</text>
<text x="112.95" y="521.8" text-anchor="middle" font-size="5" letter-spacing="0.3" fill="#444" >JUNCTION</text>
<text x="112.95" y="528.6" text-anchor="middle" font-size="5" letter-spacing="0.3" fill="#444" >CONNECTOR</text>
</svg>
</body></html>
